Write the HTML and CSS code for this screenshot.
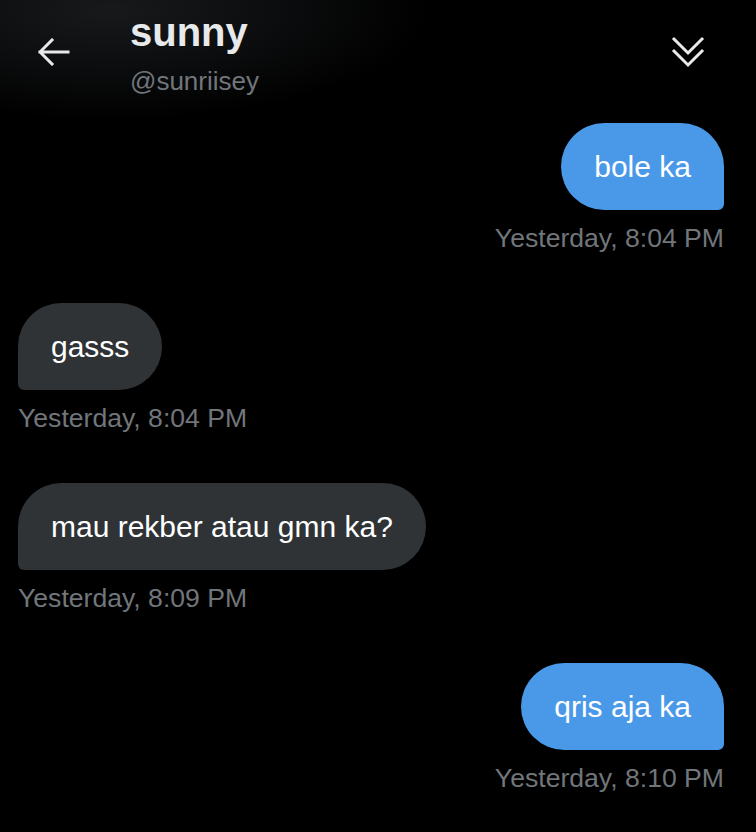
FILE: index.html
```html
<!DOCTYPE html>
<html lang="en">
<head>
  <meta charset="UTF-8" />
  <meta name="viewport" content="width=device-width, initial-scale=1.0"/>
  <title>sunny</title>
  <link rel="stylesheet" href="styles.css">
</head>
<body>

<header class="top-bar">
  <button class="icon-btn back-btn" aria-label="Back">
    <svg width="32" height="28" viewBox="0 0 32 28">
      <path d="M30 14H2M14 2L2 14l12 12" fill="none" stroke="#e7e9ea" stroke-width="3" stroke-linecap="square"/>
    </svg>
  </button>
  <div class="profile">
    <div class="name">sunny</div>
    <div class="handle">@sunriisey</div>
  </div>
  <button class="icon-btn jump-btn" aria-label="Jump to latest">
    <svg width="34" height="32" viewBox="0 0 34 32">
      <path d="M3 3l14 14L31 3M3 15l14 14L31 15" fill="none" stroke="#e7e9ea" stroke-width="3" stroke-linecap="square"/>
    </svg>
  </button>
</header>

<main class="chat">
  <div class="msg sent">
    <div class="bubble">bole ka</div>
    <div class="time">Yesterday, 8:04 PM</div>
  </div>

  <div class="msg received">
    <div class="bubble">gasss</div>
    <div class="time">Yesterday, 8:04 PM</div>
  </div>

  <div class="msg received">
    <div class="bubble">mau rekber atau gmn ka?</div>
    <div class="time">Yesterday, 8:09 PM</div>
  </div>

  <div class="msg sent">
    <div class="bubble">qris aja ka</div>
    <div class="time">Yesterday, 8:10 PM</div>
  </div>
</main>

</body>
</html>
```

FILE: styles.css
```css
body {
  font-family: 'Liberation Sans', Arial, sans-serif;
  margin: 0;
  padding: 0;
  background: #000 radial-gradient(ellipse 320px 110px at 110px 10px, #17191b 0%, #0b0c0d 55%, #000 100%) no-repeat;
  color: #e7e9ea;
  height: 832px;
  overflow: hidden;
}

.top-bar {
  display: flex;
  align-items: flex-start;
  height: 96px;
  padding: 9px 51px 0 38px;
  box-sizing: border-box;
}

.icon-btn {
  background: none;
  border: none;
  padding: 0;
  cursor: pointer;
  display: flex;
}

.back-btn {
  margin-top: 29px;
}

.profile {
  flex: 1;
  margin-left: 60px;
}

.name {
  font-size: 40px;
  line-height: 46px;
  font-weight: 700;
  color: #e7e9ea;
}

.handle {
  font-size: 26px;
  line-height: 30px;
  margin-top: 11px;
  color: #71767b;
}

.jump-btn {
  margin-top: 27px;
}

.chat {
  padding: 27px 32px 0 18px;
}

.msg {
  display: flex;
  flex-direction: column;
  margin-bottom: 50px;
}

.msg.sent {
  align-items: flex-end;
}

.msg.received {
  align-items: flex-start;
}

.bubble {
  font-size: 30px;
  line-height: 35px;
  padding: 26px 33px;
  color: #fff;
  border-radius: 44px;
}

.sent .bubble {
  background: #4a99e8;
  border-bottom-right-radius: 6px;
}

.received .bubble {
  background: #2f3336;
  border-bottom-left-radius: 6px;
}

.time {
  margin-top: 13px;
  font-size: 26.6px;
  line-height: 30px;
  color: #71767b;
}
```
